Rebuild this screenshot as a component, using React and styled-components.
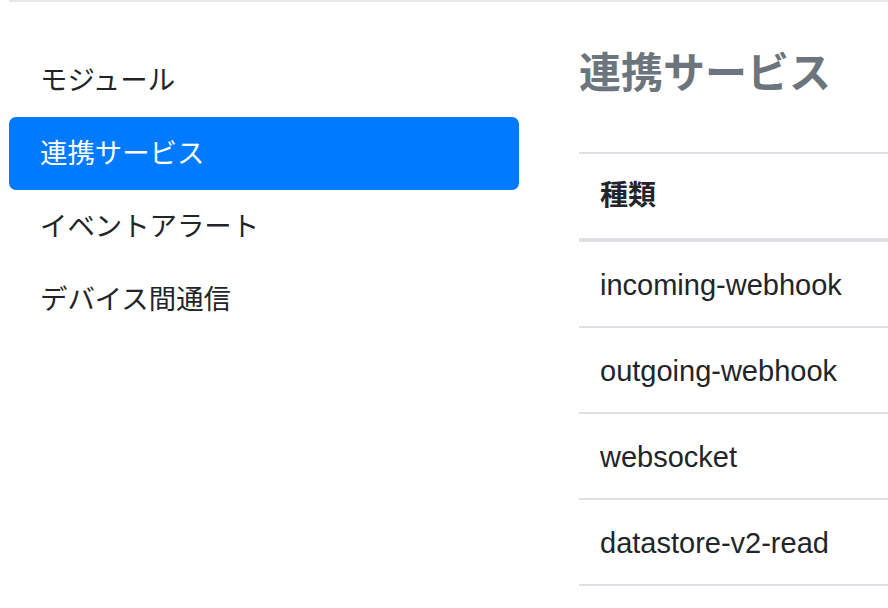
import React from 'react'
import styled, { createGlobalStyle } from 'styled-components'

const GlobalStyle = createGlobalStyle`
  body {
    margin: 0;
    background: #fff;
    color: #212529;
    font-family: "Liberation Sans", "Noto Sans CJK JP", sans-serif;
  }
`

const Page = styled.div`
  width: 888px;
  height: 608px;
  overflow: hidden;
  padding-left: 9px;
  box-sizing: border-box;
`

const Wrapper = styled.div`
  border-top: 2px solid #e5e7ea;
  display: grid;
  grid-template-columns: 510px 1fr;
  column-gap: 60px;
  width: 1000px;
`

const Nav = styled.nav`
  display: flex;
  flex-direction: column;
  padding-top: 42px;
`

const NavLink = styled.a`
  display: block;
  padding: 16px 31px 15px;
  font-size: 27.4px;
  line-height: 42px;
  border-radius: 7px;
  text-decoration: none;
  color: ${p => (p.$active ? '#fff' : '#212529')};
  background: ${p => (p.$active ? '#007bff' : 'transparent')};
`

const Main = styled.main`
  padding-top: 46px;
`

const Heading = styled.h4`
  margin: 0 0 52px;
  font-size: 42px;
  line-height: 52px;
  font-weight: 700;
  color: #6c757d;
`

const Table = styled.table`
  width: 100%;
  border-collapse: collapse;
  font-size: 29px;
`

const Th = styled.th`
  text-align: left;
  padding: 21px;
  line-height: 42px;
  font-size: 28px;
  font-weight: 700;
  border-top: 2px solid #dee2e6;
  border-bottom: 4px solid #dee2e6;
`

const Td = styled.td`
  padding: 22px 21px 20px;
  line-height: 42px;
  border-bottom: 2px solid #dee2e6;
`

const menu = ['モジュール', '連携サービス', 'イベントアラート', 'デバイス間通信']
const services = ['incoming-webhook', 'outgoing-webhook', 'websocket', 'datastore-v2-read']

export default function App() {
  return (
    <Page>
      <GlobalStyle />
      <Wrapper>
        <Nav>
          {menu.map(m => (
            <NavLink key={m} href="#" $active={m === '連携サービス'}>{m}</NavLink>
          ))}
        </Nav>
        <Main>
          <Heading>連携サービス</Heading>
          <Table>
            <thead>
              <tr><Th>種類</Th></tr>
            </thead>
            <tbody>
              {services.map(s => (
                <tr key={s}><Td>{s}</Td></tr>
              ))}
            </tbody>
          </Table>
        </Main>
      </Wrapper>
    </Page>
  )
}
